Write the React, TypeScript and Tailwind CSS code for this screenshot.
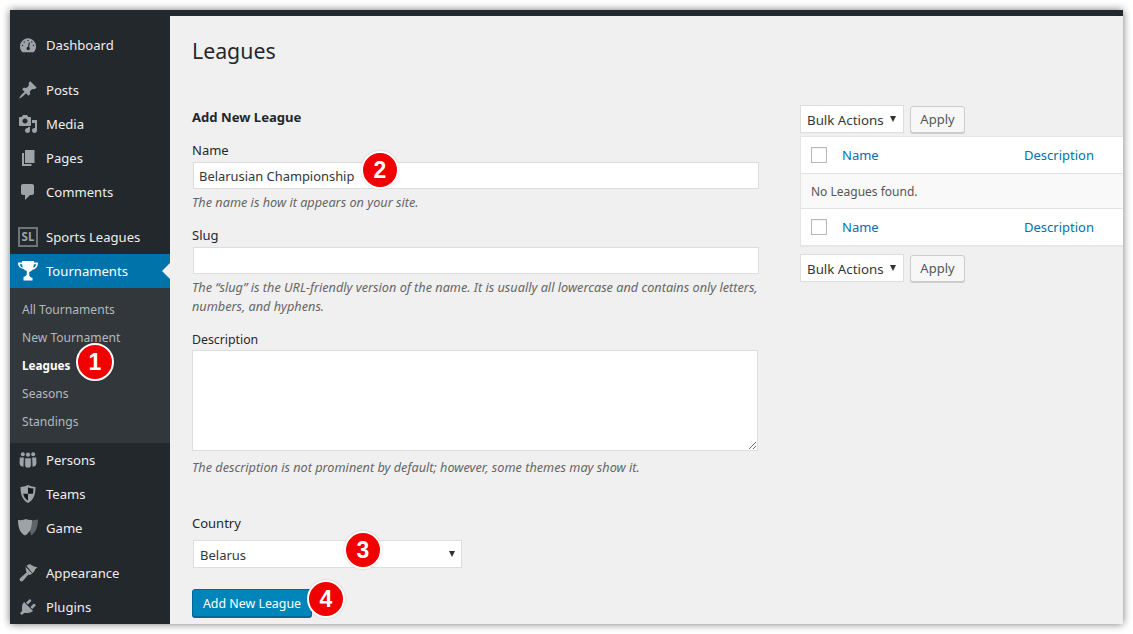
import { ReactNode } from 'react';

const Dash = ({ d, rule }: { d: string; rule?: boolean }) => (
  <svg viewBox="0 0 20 20" className="w-5 h-5 fill-[#9ea3a8]">
    <path d={d} fillRule={rule ? 'evenodd' : undefined} />
  </svg>
);

const icons: Record<string, ReactNode> = {
  dashboard: (
    <svg viewBox="0 0 20 20" className="w-5 h-5">
      <path d="M4.400 17.200C2.900 15.800 2 13.900 2 11.500 2 6.900 5.600 3.200 10 3.200s8 3.700 8 8.300c0 2.400-.9 4.300-2.400 5.700z" fill="#9ea3a8" />
      <path d="M10 5.400v.1M6.200 6.900v.1M13.800 6.900v.1M4.500 10.500v.1M15.500 10.500v.1" stroke="#23282d" strokeWidth="1.400" strokeLinecap="round" />
      <path d="M11.400 7.500l-1 5" stroke="#23282d" strokeWidth="1.200" />
      <circle cx="10.200" cy="13.500" r="1.700" fill="#23282d" />
    </svg>
  ),
  post: <Dash d="M10.440 3.020l1.820-1.820 6.360 6.350-1.830 1.820c-1.050-.68-2.480-.57-3.410.36l-.75.75c-.92.93-1.040 2.350-.35 3.410l-1.830 1.820-2.410-2.410-2.800 2.790c-.42.42-3.380 2.710-3.800 2.290s1.860-3.390 2.280-3.810l2.790-2.790L4.100 9.360l1.830-1.820c1.050.69 2.480.57 3.400-.36l.75-.75c.93-.92 1.050-2.350.36-3.410z" />,
  media: <Dash rule d="M13 11V4c0-.55-.45-1-1-1h-1.670L9 1H5L3.670 3H2c-.55 0-1 .45-1 1v7c0 .55.45 1 1 1h10c.55 0 1-.45 1-1zM7 4.500c1.380 0 2.500 1.120 2.500 2.500S8.380 9.500 7 9.500 4.500 8.380 4.500 7 5.620 4.500 7 4.500zM14 6h5v10.500c0 1.380-1.120 2.500-2.500 2.500S14 17.880 14 16.500s1.120-2.500 2.500-2.500c.17 0 .34.020.5.050V9h-3V6zm-4 8.050V13h2v3.500c0 1.380-1.120 2.500-2.500 2.500S7 17.880 7 16.500 8.120 14 9.500 14c.17 0 .34.020.5.050z" />,
  page: <Dash d="M7 15V2h9.500v13H7zm-1 1h7.500v2H4V5h2v11z" />,
  comment: <Dash d="M5 2h9c1.100 0 2 .9 2 2v7c0 1.100-.9 2-2 2h-2l-5 5v-5H5c-1.100 0-2-.9-2-2V4c0-1.100.9-2 2-2z" />,
  sl: (
    <span className="w-5 h-5 shrink-0 border-2 border-[#6f7478] flex items-center justify-center text-[11.500px] font-bold leading-none text-[#9ea3a8]">SL</span>
  ),
  trophy: (
    <svg viewBox="0 0 20 20" className="w-5 h-5 fill-white">
      <path fillRule="evenodd" d="M4 0h12v1.500h4c.1 3.800-1.900 6.700-5.700 7.400-.8 1-1.900 1.700-3.100 2v3.300c.4 1.500 1.500 2.300 3.300 2.800v2.500H5.500V16c1.800-.5 2.900-1.300 3.300-2.800v-3.300c-1.200-.3-2.300-1-3.100-2C1.900 7.200-.1 5.300 0 1.500h4zM1.800 3.200c.3 1.700 1.300 2.900 3.100 3.500-.4-1.100-.7-2.300-.8-3.500zm16.400 0h-2.300c-.1 1.200-.4 2.400-.8 3.500 1.800-.6 2.800-1.800 3.100-3.500z" />
    </svg>
  ),
  users: (
    <svg viewBox="0 0 20 20" className="w-5 h-5 fill-[#9ea3a8]">
      <circle cx="4.800" cy="4.300" r="2" />
      <circle cx="15.200" cy="4.300" r="2" />
      <path d="M1.800 7.400h4l-.3 9.300c-1 0-1.900-.3-2.500-.8-.8-.7-1.400-1.700-1.400-3zM18.200 7.400h-4l.3 9.300c1 0 1.900-.3 2.500-.8.800-.7 1.400-1.700 1.400-3z" />
      <circle cx="10" cy="4.700" r="2.400" stroke="#23282d" strokeWidth=".6" />
      <path d="M6.800 8h6.400v7c0 1.600-1 3-3.200 3s-3.200-1.400-3.200-3z" stroke="#23282d" strokeWidth=".6" />
    </svg>
  ),
  shield: (
    <svg viewBox="0 0 20 20" className="w-5 h-5">
      <path d="M10 1c2.300 1.300 5 1.900 7.500 1.900 0 7.200-1.700 12.900-7.500 16.100C4.200 15.800 2.500 10.100 2.500 2.900 5 2.900 7.700 2.300 10 1z" fill="#9ea3a8" />
      <path d="M10 3.200c1.700.8 3.500 1.200 5.500 1.400-.1 1.800-.2 3.500-.6 5.100H10zM10 9.700v7c-2.700-1.800-4.200-4.100-4.800-7z" fill="#16191c" />
    </svg>
  ),
  game: (
    <svg viewBox="0 0 20 20" className="w-5 h-5">
      <path d="M10 2c2.500.5 7 .3 10-.4 0 7.800-2.600 13.600-7 15.900z" fill="#5f6468" />
      <path d="M0 2c3.500.4 6-.1 8-.9 1.700.8 3.500 1.100 6 .9 0 7.500-2 13-7 15.500C2 15 0 9.500 0 2z" fill="#9ea3a8" />
    </svg>
  ),
  brush: (
    <svg viewBox="0 0 20 20" className="w-5 h-5 fill-[#9ea3a8]">
      <path d="M8.500 2.800l2.200-1.400c1.500-.6 2.400.3 3.600 1.200 1.300 1 3 1.700 5 1.400-.4 1-1.100 1.800-2.200 2.300 0 .9-.4 1.700-1 2.300l-1.500 1.700zM7.500 3.800l6.700 6.700-2.300 1.500-1.500-.6-5.300 6.300c-.8.900-2.100.9-2.900.1s-.8-2.100.1-2.900l6.300-5.300-.5-1.500z" />
    </svg>
  ),
  plugin: <Dash d="M13.110 4.360L9.870 7.600 8 5.730l3.240-3.240c.35-.34 1.050-.2 1.560.31.52.51.66 1.210.31 1.560zm-8 1.770l.91-1.120 9.010 9.010-1.190.84c-.71.71-2.630 1.160-3.820 1.160H6.140L4.900 17.260c-.59.59-1.540.59-2.120 0-.59-.58-.59-1.530 0-2.120l1.240-1.240v-3.880c0-1.130.46-3.050 1.180-3.880zm7.260 3.970l3.240-3.240c.34-.35 1.040-.21 1.550.3.51.51.65 1.210.31 1.560l-3.240 3.240z" />,
};

const MenuItem = ({ icon, label, active }: { icon: string; label: string; active?: boolean }) => (
  <div className={`relative h-[34px] flex items-center pl-2 gap-2 ${active ? 'bg-[#0073aa] text-white' : 'text-[#eeeeee]'}`}>
    <span className="w-5 h-5 flex items-center justify-center">{icons[icon]}</span>
    <span className="pt-[2px]">{label}</span>
    {active && (
      <span className="absolute right-0 top-[9px] border-y-8 border-r-8 border-y-transparent border-r-[#f1f1f1]" />
    )}
  </div>
);

const Badge = ({ n, className }: { n: number; className: string }) => (
  <span className={`absolute w-[38px] h-[38px] rounded-full bg-[#f00000] border-2 border-white shadow-[0_0_2px_rgba(0,0,0,0.2)] flex items-center justify-center text-white font-bold text-[23px] leading-none font-['Liberation_Sans',sans-serif] ${className}`}>
    {n}
  </span>
);

const Arrow = () => (
  <span className="w-0 h-0 border-x-[3.5px] border-t-[6px] border-x-transparent border-t-[#333333]" />
);

const BulkActions = () => (
  <div className="flex items-center gap-[6px]">
    <div className="w-[104px] h-[28px] bg-white border border-[#dddddd] flex items-center justify-between pl-[6px] pr-[7px] text-[13.300px] text-[#32373c]">
      <span className="pt-[3px]">Bulk Actions</span>
      <Arrow />
    </div>
    <button className="w-[55px] h-[27px] pt-[2px] bg-[#f7f7f7] border border-[#cccccc] rounded-[3px] shadow-[0_1px_0_#cccccc] text-[#555555]">Apply</button>
  </div>
);

const HeadRow = () => (
  <div className="h-9 flex items-center pl-[10px] bg-white">
    <span className="w-4 h-4 border border-[#b4b9be] bg-white shadow-[inset_0_1px_2px_rgba(0,0,0,0.05)]" />
    <span className="ml-[15px] w-[182px] pt-[2px] text-[#0073aa]">Name</span>
    <span className="pt-[2px] text-[#0073aa]">Description</span>
  </div>
);

const helpText = "italic text-[#666666] text-[12.700px] leading-[19px]";

export default function App() {
  return (
    <div className="h-[634px] bg-white p-[10px] font-['Noto_Sans','Open_Sans',sans-serif] text-[13px] text-[#444444]">
      <div className="relative h-[614px] overflow-hidden flex flex-col bg-[#f0f0f0] shadow-[0_0_8px_rgba(0,0,0,0.55)]">
        <div className="h-[6px] bg-[#23282d] shrink-0" />
        <div className="flex flex-1 min-h-0">
          <aside className="w-40 shrink-0 bg-[#23282d] pt-3 text-[13.100px]">
            <MenuItem icon="dashboard" label="Dashboard" />
            <div className="mt-[11px]">
              <MenuItem icon="post" label="Posts" />
              <MenuItem icon="media" label="Media" />
              <MenuItem icon="page" label="Pages" />
              <MenuItem icon="comment" label="Comments" />
            </div>
            <div className="mt-[11px]">
              <MenuItem icon="sl" label="Sports Leagues" />
              <MenuItem icon="trophy" label="Tournaments" active />
            </div>
            <div className="relative bg-[#32373c] h-[155px] pt-2 pl-3 text-[12.100px] text-[#b4b9be]">
              <div className="h-7 flex items-center">All Tournaments</div>
              <div className="h-7 flex items-center">New Tournament</div>
              <div className="h-7 flex items-center font-bold text-[11.700px] text-white">Leagues</div>
              <div className="h-7 flex items-center">Seasons</div>
              <div className="h-7 flex items-center">Standings</div>
            </div>
            <MenuItem icon="users" label="Persons" />
            <MenuItem icon="shield" label="Teams" />
            <MenuItem icon="game" label="Game" />
            <div className="mt-[11px]">
              <MenuItem icon="brush" label="Appearance" />
              <MenuItem icon="plugin" label="Plugins" />
            </div>
          </aside>

          <main className="flex-1 min-w-0 pl-[22px]">
            <h1 className="text-[21.300px] leading-[30px] text-[#23282d] mt-5">Leagues</h1>
            <div className="flex">
              <div className="w-[567px] shrink-0 pt-[41px]">
                <h2 className="font-bold text-[13.100px] leading-[20px] text-[#23282d]">Add New League</h2>
                <label className="block mt-[13px] leading-[20px] text-[#23282d]">Name</label>
                <input
                  defaultValue="Belarusian Championship"
                  className="block mt-[2px] ml-px w-[566px] h-[27px] px-[5px] bg-white border border-[#dddddd] text-[12.900px] text-[#32373c] outline-none"
                />
                <p className={`${helpText} mt-1`}>The name is how it appears on your site.</p>
                <label className="block mt-[13px] leading-[20px] text-[#23282d]">Slug</label>
                <input className="block mt-[2px] ml-px w-[566px] h-[27px] px-[6px] bg-white border border-[#dddddd] outline-none" />
                <p className={`${helpText} mt-1`}>
                  The “slug” is the URL-friendly version of the name. It is usually all lowercase and contains only letters,
                  numbers, and hyphens.
                </p>
                <label className="block mt-[14px] leading-[20px] text-[12.300px] text-[#23282d]">Description</label>
                <textarea className="block w-[566px] h-[101px] bg-white border border-[#dddddd] outline-none" />
                <p className={`${helpText} mt-[7px]`}>The description is not prominent by default; however, some themes may show it.</p>
                <label className="block mt-9 leading-[20px] text-[#23282d]">Country</label>
                <div className="mt-[7px] ml-px w-[269px] h-[28px] bg-white border border-[#dddddd] flex items-center justify-between pl-[6px] pr-[6px] text-[#32373c]">
                  <span className="pt-[3px]">Belarus</span>
                  <Arrow />
                </div>
                <button className="block mt-[21px] w-[120px] h-7 pt-[3px] bg-[#0085ba] border border-[#006799] rounded-[3px] shadow-[0_1px_0_#006799] text-[12.400px] text-white">
                  Add New League
                </button>
              </div>

              <div className="ml-[41px] flex-1 min-w-0 pt-[39px]">
                <BulkActions />
                <div className="mt-[3px] border border-[#e5e5e5] border-r-0 bg-white shadow-[0_1px_1px_rgba(0,0,0,0.04)]">
                  <HeadRow />
                  <div className="h-9 flex items-center pl-[10px] pt-[2px] bg-[#f9f9f9] border-y border-[#e1e1e1] text-[12px] text-[#555555]">No Leagues found.</div>
                  <HeadRow />
                </div>
                <div className="mt-2">
                  <BulkActions />
                </div>
              </div>
            </div>
          </main>
        </div>

        <Badge n={1} className="left-[66px] top-[333px]" />
        <Badge n={2} className="left-[351px] top-[141px]" />
        <Badge n={3} className="left-[334px] top-[521px]" />
        <Badge n={4} className="left-[297px] top-[570px]" />
      </div>
    </div>
  );
}
